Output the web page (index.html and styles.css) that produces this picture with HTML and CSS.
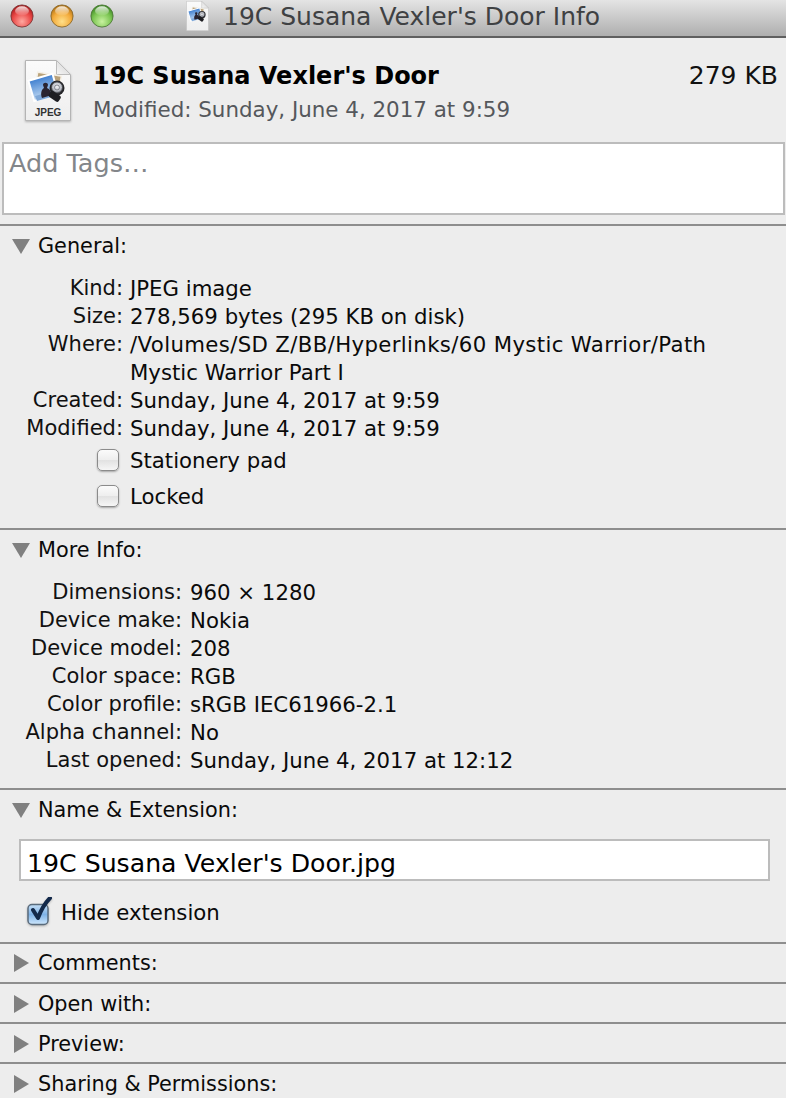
FILE: index.html
```html
<!DOCTYPE html>
<html lang="en">
<head>
<meta charset="utf-8">
<title>19C Susana Vexler's Door Info</title>
<link rel="stylesheet" href="styles.css">
</head>
<body>
<svg class="defs" width="0" height="0" aria-hidden="true">
  <defs>
    <linearGradient id="fileG" x1="0" y1="0" x2="0" y2="1"><stop offset="0" stop-color="#fbfbfb"/><stop offset="1" stop-color="#eeeeee"/></linearGradient>
    <linearGradient id="foldG" x1="0" y1="1" x2="1" y2="0"><stop offset="0" stop-color="#f6f6f6"/><stop offset="1" stop-color="#cfcfcf"/></linearGradient>
    <radialGradient id="redG" cx=".5" cy=".75" r=".7"><stop offset="0" stop-color="#ffa8a0"/><stop offset=".6" stop-color="#ea4a48"/><stop offset="1" stop-color="#b01a1c"/></radialGradient>
    <radialGradient id="yelG" cx=".5" cy=".75" r=".7"><stop offset="0" stop-color="#ffe08a"/><stop offset=".6" stop-color="#f3ab3c"/><stop offset="1" stop-color="#b57414"/></radialGradient>
    <radialGradient id="grnG" cx=".5" cy=".75" r=".7"><stop offset="0" stop-color="#c8f2a0"/><stop offset=".6" stop-color="#7cc553"/><stop offset="1" stop-color="#3f8a24"/></radialGradient>
    <linearGradient id="shine" x1="0" y1="0" x2="0" y2="1"><stop offset="0" stop-color="#fff" stop-opacity=".85"/><stop offset="1" stop-color="#fff" stop-opacity=".05"/></linearGradient>
    <linearGradient id="sky" x1="0" y1="0" x2="0" y2="1"><stop offset="0" stop-color="#3f7fd0"/><stop offset="1" stop-color="#c4dcf4"/></linearGradient>
    <radialGradient id="lens" cx=".5" cy=".4" r=".6"><stop offset="0" stop-color="#f2f3f6"/><stop offset=".7" stop-color="#b9bcc4"/><stop offset="1" stop-color="#5d6068"/></radialGradient>
    <symbol id="fileicon" viewBox="0 0 46 61">
      <path d="M.5.5h31L45.500 14.500V60.500H.5z" fill="url(#fileG)" stroke="#b4b4b4"/>
      <path d="M31.500.5v14H45.500z" fill="url(#foldG)" stroke="#bcbcbc"/>
      <rect x="11" y="14" width="24" height="18" transform="rotate(10 23 23)" fill="#b9a27a" stroke="#f5f0e6" stroke-width="1.500"/>
      <rect x="6" y="17" width="25" height="21" transform="rotate(-16 18 28)" fill="url(#sky)" stroke="#fff" stroke-width="2"/>
      <path d="M10 36l18-5 2 5-18 5z" fill="#7fa8d8"/>
      <path d="M17 38c-2-5 0-9 2-10l-1-3c0-3 5-3 5 0l-1 3c3 1 4 4 5 7z" fill="#2a2430"/>
      <circle cx="32" cy="28" r="7.500" fill="#26262a"/>
      <circle cx="32" cy="27.500" r="5.500" fill="url(#lens)" stroke="#4a4c52" stroke-width=".8"/>
      <circle cx="32" cy="27.500" r="2.500" fill="none" stroke="#74777f" stroke-width=".8"/>
      <rect x="24" y="33" width="12" height="7" rx="2" transform="rotate(35 30 36)" fill="#1e1e22"/>
    </symbol>
  </defs>
</svg>
<main class="window">
  <header class="titlebar">
    <div class="lights">
      <svg class="light" viewBox="0 0 26 26"><circle cx="13" cy="13" r="12" fill="url(#redG)" stroke="#7c3838"/><ellipse cx="13" cy="7.500" rx="7.500" ry="5" fill="url(#shine)"/></svg>
      <svg class="light" viewBox="0 0 26 26"><circle cx="13" cy="13" r="12" fill="url(#yelG)" stroke="#8a6a30"/><ellipse cx="13" cy="7.500" rx="7.500" ry="5" fill="url(#shine)"/></svg>
      <svg class="light" viewBox="0 0 26 26"><circle cx="13" cy="13" r="12" fill="url(#grnG)" stroke="#4f7a3c"/><ellipse cx="13" cy="7.500" rx="7.500" ry="5" fill="url(#shine)"/></svg>
    </div>
    <div class="title">
      <svg class="title-icon"><use href="#fileicon"/></svg>
      <span>19C Susana Vexler's Door Info</span>
    </div>
  </header>

  <section class="summary">
    <svg class="file-icon"><use href="#fileicon"/></svg>
    <span class="jpeg">JPEG</span>
    <div class="summary-text">
      <div class="summary-top"><strong class="name">19C Susana Vexler's Door</strong><span class="filesize">279 KB</span></div>
      <div class="modified">Modified: Sunday, June 4, 2017 at 9:59</div>
    </div>
  </section>

  <div class="tags">Add Tags…</div>

  <section class="panel panel-general">
    <h2 class="head open"><span class="tri-down"></span>General:</h2>
    <dl class="info info-general">
      <dt>Kind:</dt><dd>JPEG image</dd>
      <dt>Size:</dt><dd>278,569 bytes (295 KB on disk)</dd>
      <dt>Where:</dt><dd class="path">/Volumes/SD Z/BB/Hyperlinks/60 Mystic Warrior/Path</dd>
      <dt></dt><dd>Mystic Warrior Part I</dd>
      <dt>Created:</dt><dd>Sunday, June 4, 2017 at 9:59</dd>
      <dt>Modified:</dt><dd>Sunday, June 4, 2017 at 9:59</dd>
    </dl>
    <div class="checks">
      <div class="check"><span class="box"></span>Stationery pad</div>
      <div class="check"><span class="box"></span>Locked</div>
    </div>
  </section>

  <section class="panel panel-more">
    <h2 class="head open"><span class="tri-down"></span>More Info:</h2>
    <dl class="info info-more">
      <dt>Dimensions:</dt><dd>960 × 1280</dd>
      <dt>Device make:</dt><dd>Nokia</dd>
      <dt>Device model:</dt><dd>208</dd>
      <dt>Color space:</dt><dd>RGB</dd>
      <dt>Color profile:</dt><dd>sRGB IEC61966-2.1</dd>
      <dt>Alpha channel:</dt><dd>No</dd>
      <dt>Last opened:</dt><dd>Sunday, June 4, 2017 at 12:12</dd>
    </dl>
  </section>

  <section class="panel panel-name">
    <h2 class="head open"><span class="tri-down"></span>Name &amp; Extension:</h2>
    <div class="filename">19C Susana Vexler's Door.jpg</div>
    <div class="hide-ext">
      <svg class="checked" viewBox="0 0 26 30">
        <defs><linearGradient id="chk" x1="0" y1="0" x2="0" y2="1"><stop offset="0" stop-color="#c5dff6"/><stop offset=".5" stop-color="#7fb2e6"/><stop offset="1" stop-color="#cfe8fd"/></linearGradient></defs>
        <rect x="2" y="7.500" width="20" height="20" rx="4" fill="url(#chk)" stroke="#5a6b7c" stroke-width="1.500"/>
        <path d="M7 13l5 8c3-8 7-15 12-20" fill="none" stroke="#13294a" stroke-width="4" stroke-linecap="round" stroke-linejoin="round"/>
      </svg>
      Hide extension
    </div>
  </section>

  <section class="panel collapsed"><h2 class="head"><span class="tri-right"></span>Comments:</h2></section>
  <section class="panel collapsed"><h2 class="head"><span class="tri-right"></span>Open with:</h2></section>
  <section class="panel collapsed"><h2 class="head"><span class="tri-right"></span>Preview:</h2></section>
  <section class="panel collapsed"><h2 class="head"><span class="tri-right"></span>Sharing &amp; Permissions:</h2></section>
</main>
</body>
</html>
```

FILE: styles.css
```css
* { box-sizing: border-box; }
html, body { margin: 0; padding: 0; height: 100%; overflow: hidden; }
body {
  background: #ededed;
  color: #0a0a0a;
  font-family: "DejaVu Sans", "Liberation Sans", sans-serif;
  font-size: 21.25px;
}
.defs { position: absolute; }
.window { height: 1098px; overflow: hidden; }

.titlebar {
  height: 38px;
  display: flex;
  align-items: center;
  background: linear-gradient(#e4e4e4, #aeaeae);
  border-bottom: 2px solid #5f5f5f;
}
.lights { display: flex; gap: 16px; padding-left: 10px; margin-top: -4px; }
.light { width: 24px; height: 24px; }
.title {
  display: flex;
  align-items: center;
  gap: 14px;
  margin-left: 72px;
  margin-top: -4px;
  font-size: 25px;
  color: #3f4143;
  white-space: nowrap;
}
.title-icon { width: 23px; height: 30px; }

.summary {
  height: 104px;
  display: flex;
  align-items: flex-start;
  padding: 22px 8px 0 25px;
  position: relative;
}
.file-icon { width: 46px; height: 61px; flex: none; filter: drop-shadow(0 1px 1px rgba(0,0,0,.25)); }
.jpeg {
  position: absolute;
  left: 25px;
  top: 69px;
  width: 46px;
  text-align: center;
  font-size: 10px;
  font-family: "Liberation Sans", sans-serif;
  font-weight: bold;
  color: #333;
}
.summary-text { flex: 1; margin: 2px 0 0 22px; }
.summary-top { display: flex; justify-content: space-between; align-items: center; height: 28px; }
.name { font-size: 24px; font-weight: bold; color: #000; }
.filesize { font-size: 25px; color: #111; margin-top: -2px; }
.modified { margin-top: 7px; color: #55585c; font-size: 21.4px; }

.tags {
  height: 73px;
  margin: 0 1px 9px 2px;
  background: #fff;
  border: 2px solid #bcbcbc;
  padding: 4px 5px;
  font-size: 25.5px;
  color: #83868a;
}

.panel { border-top: 2px solid #8e8e8e; }
.head {
  margin: 0;
  height: 38px;
  display: flex;
  align-items: center;
  font-size: 20.8px;
  font-weight: normal;
  padding-left: 12px;
}
.head.open { height: 40px; }
.collapsed + .collapsed .head { padding-top: 2px; }
.tri-down {
  width: 0; height: 0;
  margin-right: 8px;
  border-left: 9px solid transparent;
  border-right: 9px solid transparent;
  border-top: 15px solid #808080;
}
.tri-right {
  width: 0; height: 0;
  margin: 0 9px 0 2px;
  border-top: 9px solid transparent;
  border-bottom: 9px solid transparent;
  border-left: 15px solid #808080;
}
.info {
  margin: 0;
  display: grid;
  grid-auto-rows: 28px;
  align-items: center;
  column-gap: 7px;
}
.info dt { text-align: right; grid-column: 1; color: #111; font-size: 21px; }
.info dd { margin: 0; grid-column: 2; white-space: nowrap; }
.info .path { letter-spacing: .36px; }
.info-general { grid-template-columns: 123px 1fr; padding-top: 8px; }
.info-more { grid-template-columns: 182px 1fr; column-gap: 8px; padding-top: 8px; }

.panel-general { height: 304px; }
.panel-more { height: 260px; }
.panel-name { height: 154px; }
.collapsed { height: 40px; }

.checks { display: flex; flex-direction: column; gap: 12px; padding: 6px 0 0 97px; }
.check { display: flex; align-items: center; gap: 11px; height: 24px; }
.box {
  width: 22px; height: 22px;
  border-radius: 5px;
  border: 1px solid #8b8b8b;
  background: linear-gradient(#fbfbfb, #eeeeee 50%, #e2e2e2 52%, #f6f6f6);
  box-shadow: 0 1px 2px rgba(0,0,0,.3);
}

.filename {
  height: 42px;
  margin: 9px 16px 0 19px;
  border: 2px solid #bcbcbc;
  background: #fff;
  padding: 6px 6px 0;
  display: flex;
  align-items: center;
  font-size: 25.2px;
  color: #000;
  white-space: nowrap;
}
.hide-ext { display: flex; align-items: center; gap: 9px; height: 30px; margin: 16px 0 0 26px; }
.checked { width: 26px; height: 30px; flex: none; filter: drop-shadow(0 1px 1px rgba(0,0,0,.25)); }
```
